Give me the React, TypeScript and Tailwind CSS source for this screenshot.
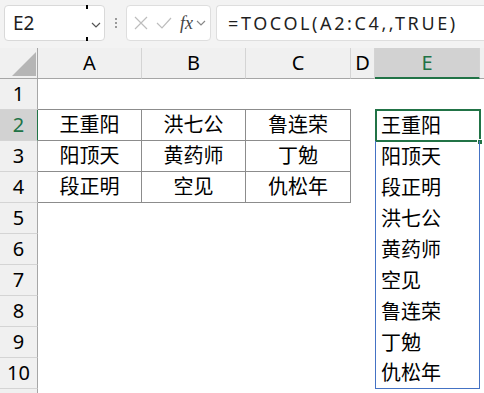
import React from 'react'

const FONT = { fontFamily: '"Noto Sans", "Noto Sans CJK SC", sans-serif' }

const COLS = [
  { key: 'A', w: 'w-[104px]' },
  { key: 'B', w: 'w-[104px]' },
  { key: 'C', w: 'w-[105px]' },
  { key: 'D', w: 'w-[24px]' },
  { key: 'E', w: 'w-[105px]' },
]

const table = [
  ['王重阳', '洪七公', '鲁连荣'],
  ['阳顶天', '黄药师', '丁勉'],
  ['段正明', '空见', '仇松年'],
]

// TOCOL(..., , TRUE) scans column by column
const spill = [0, 1, 2].flatMap(c => table.map(r => r[c]))

function Chevron({ className }: { className?: string }) {
  return (
    <svg width="10" height="6" viewBox="0 0 10 6" fill="none" stroke="currentColor" strokeWidth="1.2" className={className}>
      <path d="M1 1l4 4 4-4" />
    </svg>
  )
}

function Toolbar() {
  return (
    <div className="flex h-[48px] items-start gap-0 bg-[#f3f3f3] pt-[5px]">
      <div className="relative ml-[4px] flex h-[36px] w-[101px] items-center rounded-[4px] border border-[#d9d9d9] bg-white">
        <span className="pl-[8px] text-[19px] text-[#1f1f1f]">E2</span>
        <span className="absolute left-[81px] top-[-1px] h-[4px] w-[2px] bg-black" />
        <span className="absolute left-[81px] bottom-[-1px] h-[4px] w-[2px] bg-black" />
        <Chevron className="absolute left-[86px] top-[16px] text-[#555]" />
      </div>
      <div className="flex h-[36px] w-[21px] flex-col items-center justify-center gap-[2px]">
        <span className="h-[2px] w-[2px] bg-[#9a9a9a]" />
        <span className="h-[2px] w-[2px] bg-[#9a9a9a]" />
        <span className="h-[2px] w-[2px] bg-[#9a9a9a]" />
      </div>
      <div className="flex h-[36px] w-[85px] items-center rounded-[4px] border border-[#dedede] bg-white">
        <svg width="14" height="14" viewBox="0 0 14 14" stroke="#bdbdbd" strokeWidth="1.2" className="ml-[7px]">
          <path d="M1 1l12 12M13 1L1 13" />
        </svg>
        <svg width="16" height="12" viewBox="0 0 16 12" fill="none" stroke="#bdbdbd" strokeWidth="1.2" className="ml-[8px]">
          <path d="M1 6l5 5L15 1" />
        </svg>
        <span
          className="ml-[8px] text-[18px] italic leading-none text-[#444]"
          style={{ fontFamily: '"Liberation Serif", serif' }}
        >
          fx
        </span>
        <Chevron className="ml-[3px] text-[#888]" />
      </div>
      <div className="ml-[5px] flex h-[36px] flex-1 items-center rounded-l-[4px] border border-r-0 border-[#dedede] bg-white">
        <span className="pl-[11px] text-[18px] tracking-[2.6px] text-[#1f1f1f]">=TOCOL(A2:C4,,TRUE)</span>
      </div>
    </div>
  )
}

function HeaderRow() {
  return (
    <div className="flex h-[31px] bg-[#f0f0f0]">
      <div className="relative h-full w-[38px] border-r border-b border-[#a6a6a6]">
        <svg width="24" height="24" viewBox="0 0 24 24" className="absolute left-[12px] top-[4px]">
          <path d="M24 0V24H0Z" fill="#b5b5b5" />
        </svg>
      </div>
      {COLS.map(c => {
        const sel = c.key === 'E'
        return (
          <div
            key={c.key}
            className={`${c.w} flex h-full items-center justify-center border-r text-[20px] ${
              sel
                ? 'border-b-2 border-r-[#d4d4d4] border-b-[#217346] bg-[#d2d2d2] text-[#217346]'
                : 'border-b border-r-[#d4d4d4] border-b-[#a6a6a6] text-black'
            }`}
          >
            {c.key}
          </div>
        )
      })}
      <div className="h-full flex-1 border-b border-[#a6a6a6]" />
    </div>
  )
}

function SheetRow({ n }: { n: number }) {
  const tIdx = n - 2
  const inTable = tIdx >= 0 && tIdx < 3
  const sIdx = n - 2
  const inSpill = sIdx >= 0 && sIdx < spill.length
  const rowSel = n === 2
  return (
    <div className="flex h-[31px]">
      <div
        className={`flex h-full w-[38px] items-center justify-center border-b border-b-[#d4d4d4] text-[20px] ${
          rowSel ? 'border-r border-r-[#217346] bg-[#d2d2d2] text-[#217346]' : 'border-r border-r-[#a6a6a6] bg-[#f0f0f0] text-black'
        }`}
      >
        {n}
      </div>
      {[0, 1, 2].map(c => (
        <div
          key={c}
          className={`${COLS[c].w} flex h-full items-center justify-center text-[20px] ${
            inTable ? 'border-r border-b border-[#8c8c8c]' : n === 1 ? 'border-b border-[#8c8c8c]' : ''
          }`}
        >
          {inTable ? table[tIdx][c] : null}
        </div>
      ))}
      <div className="h-full w-[24px]" />
      <div
        className={`relative flex h-full w-[105px] items-center text-[20px] ${
          inSpill ? 'border-x border-[#4472c4] pl-[5px]' : ''
        } ${n === 10 ? 'border-b border-[#4472c4]' : ''}`}
      >
        {inSpill ? spill[sIdx] : null}
        {n === 2 && (
          <>
            <div className="pointer-events-none absolute left-[-1px] top-[-1px] h-[33px] w-[106px] border-2 border-[#217346]" />
            <div className="absolute right-[-4px] bottom-[-4px] h-[6px] w-[6px] border border-white bg-[#217346]" />
          </>
        )}
      </div>
      <div className="h-full flex-1" />
    </div>
  )
}

export default function App() {
  const rows = Array.from({ length: 10 }, (_, i) => i + 1)
  return (
    <div className="h-[393px] w-[484px] overflow-hidden bg-white text-black" style={FONT}>
      <Toolbar />
      <HeaderRow />
      {rows.map(n => (
        <SheetRow key={n} n={n} />
      ))}
      <div className="flex h-[4px]">
        <div className="h-full w-[38px] border-r border-[#a6a6a6] bg-[#f0f0f0]" />
      </div>
    </div>
  )
}
